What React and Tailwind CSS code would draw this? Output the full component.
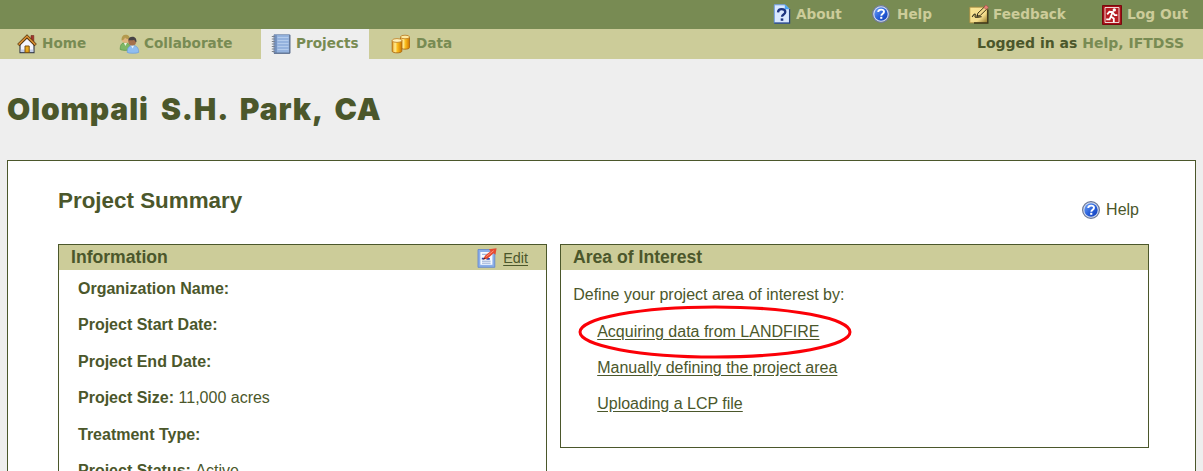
import React from "react";

function HomeIcon() {
  return (
    <svg width="20" height="20" viewBox="0 0 20 20" className="block shrink-0">
      <path d="M14 1.5h2.8v7H14z" fill="#a5342a" stroke="#6d2a22" strokeWidth=".6" />
      <path d="M3 10v8.7h14V10l-7-7z" fill="#f4f6fd" stroke="#3a404c" strokeWidth="1.2" />
      <path d="M3.8 15.5h12.4v2.6H3.8z" fill="#c3cde6" />
      <path d="M1.3 11.2 10 2.6l8.7 8.6" fill="none" stroke="#54370f" strokeWidth="3.2" />
      <path d="M1.6 10.6 10 2.3l8.4 8.3" fill="none" stroke="#d98f33" strokeWidth="1.6" />
      <path d="M8 12h4.2v6.4H8z" fill="#e9a91c" stroke="#7d5312" strokeWidth="1" />
    </svg>
  );
}

function PeopleIcon() {
  return (
    <svg width="21" height="20" viewBox="0 0 21 20" className="block shrink-0">
      <path d="M1.2 15.5c0-5 1.6-6.8 5-6.8s5 2 5 6.8c-2 1.2-8 1.2-10 0z" fill="#7db766" stroke="#5a9548" strokeWidth=".7" />
      <path d="m5 9 1.4 3L8 9z" fill="#eef5e4" />
      <circle cx="6.6" cy="5.3" r="3.8" fill="#e0b47c" />
      <path d="M2.6 6.4C2.4 2 4.6.8 6.8.8s4 1 3.7 4.2C8.7 5.2 6.8 4.4 6 3.4 5.6 4.8 4.4 6 2.6 6.4z" fill="#b39a4e" />
      <path d="M8.2 18.4c0-4.8 2-6.9 5.6-6.9s5.9 2 5.9 6.9c-2.5 1.2-9.2 1.2-11.5 0z" fill="#8fbdf0" stroke="#6b9cd8" strokeWidth=".7" />
      <path d="m12 11.5 1.5 3 1.7-3z" fill="#e9f2fd" />
      <circle cx="13.2" cy="7.6" r="3.9" fill="#a5714c" />
      <path d="M9.2 6.6C9.4 3.6 11.2 2.7 13.4 2.7s4.5 1.3 4 5.6c-1.3-.7-1.8-1.6-2.1-2.5-1.9.8-4.3.3-6.1.8z" fill="#474346" />
    </svg>
  );
}

function NotebookIcon() {
  return (
    <svg width="20" height="20" viewBox="0 0 20 20" className="block shrink-0">
      <path d="M3 .8h15.8v18.4H3z" fill="#8eacd6" stroke="#6d82a8" strokeWidth=".9" />
      <path d="M6 1.2h12.4v17.4H6z" fill="#94b2de" />
      <path d="M6.5 3.5h11M6.5 6.5h11M6.5 9.5h11M6.5 12.5h11M6.5 15.5h11" stroke="#b3cbec" strokeWidth="1" />
      <path d="M3.4 1.2h2.4v17.6H3.4z" fill="#7390bd" />
      <path d="M.8 2.5h3.2M.8 5h3.2M.8 7.5h3.2M.8 10h3.2M.8 12.5h3.2M.8 15h3.2M.8 17.5h3.2" stroke="#7b828d" strokeWidth="1" />
      <path d="M3 19.2h15.8V1" fill="none" stroke="#566784" strokeWidth="1" />
    </svg>
  );
}

function Cylinders() {
  return (
    <svg width="20" height="20" viewBox="0 0 20 20" className="block shrink-0">
      <defs>
        <linearGradient id="gold" x1="0" x2="1">
          <stop offset="0" stopColor="#e79a16" />
          <stop offset=".3" stopColor="#ffec94" />
          <stop offset=".55" stopColor="#fbbc1c" />
          <stop offset="1" stopColor="#cf7800" />
        </linearGradient>
      </defs>
      <path d="M9.5 3v10.5c0 2.2 9 2.2 9 0V3z" fill="url(#gold)" stroke="#ad6b12" strokeWidth=".9" />
      <ellipse cx="14" cy="3" rx="4.5" ry="1.8" fill="#ffeaa0" stroke="#b9791e" strokeWidth=".8" />
      <path d="M1.2 6.5v10.7c0 2.2 9.6 2.2 9.6 0V6.5z" fill="url(#gold)" stroke="#ad6b12" strokeWidth=".9" />
      <ellipse cx="6" cy="6.5" rx="4.8" ry="1.9" fill="#fff2bd" stroke="#b9791e" strokeWidth=".8" />
    </svg>
  );
}

function AboutIcon() {
  return (
    <svg width="18" height="20" viewBox="0 0 18 20" className="block shrink-0">
      <path d="M1.3 .8h10.9l4.2 4.2v14H1.3z" fill="#d9e8ff" stroke="#6e9de6" strokeWidth="1" />
      <path d="M1.3 19.1h15.3V5" fill="none" stroke="#2a4480" strokeWidth="1.2" />
      <path d="M11.8.6v4.7h4.8z" fill="#48a4f5" />
      <path d="M5 8.4C5.1 6 6.6 5.2 8.6 5.2c2.3 0 3.7 1.1 3.7 2.9 0 2.5-3.3 2.4-3.3 4.7" fill="none" stroke="#1c3380" strokeWidth="2.3" />
      <path d="M7.7 14.4h2.6v2.4H7.7z" fill="#1c3380" />
    </svg>
  );
}

function HelpIcon() {
  return (
    <svg width="18" height="18" viewBox="0 0 18 18" className="block shrink-0">
      <defs>
        <linearGradient id="orb" x1="0" y1="0" x2="1" y2="1">
          <stop offset="0" stopColor="#76a5f7" />
          <stop offset=".5" stopColor="#2b63dc" />
          <stop offset="1" stopColor="#123cb8" />
        </linearGradient>
      </defs>
      <circle cx="9" cy="9" r="8.4" fill="#d3ddf0" stroke="#6c7897" strokeWidth="1.2" />
      <circle cx="9" cy="9" r="6.7" fill="url(#orb)" />
      <path d="M6.2 7C6.3 5.2 7.4 4.6 9.1 4.6c1.8 0 2.9.8 2.9 2.2 0 1.9-2.7 1.9-2.7 3.9" fill="none" stroke="#fff" strokeWidth="1.9" />
      <path d="M8.2 11.8h2.1v2H8.2z" fill="#fff" />
    </svg>
  );
}

function FeedbackIcon() {
  return (
    <svg width="20" height="20" viewBox="0 0 20 20" className="block shrink-0">
      <defs>
        <linearGradient id="note" x1="0" y1="0" x2="1" y2="1">
          <stop offset="0" stopColor="#fbe694" />
          <stop offset=".65" stopColor="#f3dc8c" />
          <stop offset="1" stopColor="#8f7426" />
        </linearGradient>
      </defs>
      <path d="M.8 3.2h17.4v15.6H.8z" fill="url(#note)" stroke="#a98a3c" strokeWidth=".8" />
      <path d="M5 19h13.8V5.5" fill="none" stroke="#3c3618" strokeWidth="1.4" />
      <path d="M3 12.8c.8-.6 2-3 3-2.7 1 .3-.8 2.6.4 3.1 1.3.5 3-.5 6.2-.4" fill="none" stroke="#25220f" strokeWidth="1.1" />
      <path d="m7.8 12.4 1.1-3.3 7-6.6 2.3 2.2-7 6.8z" fill="#f0d98c" stroke="#463a18" strokeWidth="1" />
      <path d="m14.8 3.4 2.1-2.3 2.6 2.2-2.3 2.2z" fill="#e38079" stroke="#a84f45" strokeWidth=".6" />
      <path d="m7.6 12.6.7-2 1.4 1.4z" fill="#222" />
    </svg>
  );
}

function LogoutIcon() {
  return (
    <svg width="20" height="20" viewBox="0 0 20 20" className="block shrink-0">
      <path d="M.5.5h19v19H.5z" fill="#a60f16" stroke="#760a0f" />
      <path d="M3 2.5h14v15H3z" fill="#b61c22" stroke="#efd5d2" strokeWidth="1" />
      <circle cx="12.3" cy="4.9" r="1.7" fill="#fff" />
      <path d="M5.2 9.3 7.4 6.8l3.3.3-1.9 4.5 3 2v3.6M8.8 11.6 7.6 14.4H4.2M10.7 7.5l2 2.6h2.6" fill="none" stroke="#fff" strokeWidth="1.8" />
    </svg>
  );
}

function EditIcon() {
  return (
    <svg width="20" height="20" viewBox="0 0 20 20" className="block shrink-0">
      <path d="M1 1.5h16.8v17.8H1z" fill="#8aaee9" stroke="#5f84ca" strokeWidth=".8" />
      <path d="M3.4 4h12v12.8h-12z" fill="#f7faff" />
      <path d="M5 6.3h6M5 13.2h8.6M5 15.2h8.6" stroke="#91a9d4" strokeWidth="1" />
      <path d="M4.8 10.6h2.4M9.4 10.8h3.4" stroke="#2b48b0" strokeWidth="1.7" />
      <path d="m6.4 11.4 1.5-3.6 5.6-4.6L12 1.3 19.6.2l-1.2 6.6-1.8-1.5-6.2 5.4z" fill="#e64b31" />
      <path d="m9.3 8.6 7.4-6" stroke="#ff9c80" strokeWidth=".9" />
      <path d="m6.2 11.6 1-2.2 1.5 1.3z" fill="#5b2a20" />
    </svg>
  );
}

const fields = [
  ["Organization Name:", ""],
  ["Project Start Date:", ""],
  ["Project End Date:", ""],
  ["Project Size:", "11,000 acres"],
  ["Treatment Type:", ""],
  ["Project Status:", "Active"],
];

export default function App() {
  return (
    <div className="flex h-[471px] w-[1203px] flex-col overflow-hidden bg-[#eeeeee] font-['Liberation_Sans',Arial,sans-serif] text-[16px] text-[#4b572b]">
      <header className="font-['DejaVu_Sans',Verdana,sans-serif] text-[13.6px] font-bold">
        <div className="flex h-[29px] items-center justify-end bg-[#788b53] pr-[13px] text-[#cccc99]">
          <a className="flex w-[99px] items-center gap-[5px]"><AboutIcon />About</a>
          <a className="flex w-[97px] items-center gap-[7px]"><HelpIcon />Help</a>
          <a className="flex w-[133px] items-center gap-[4px]"><FeedbackIcon />Feedback</a>
          <a className="flex w-[88px] items-center gap-[5px] text-[13.8px] whitespace-nowrap"><LogoutIcon />Log Out</a>
        </div>
        <nav className="flex h-[30px] items-center bg-[#cccc99] pr-[19px] pl-[17px] text-[#788b53]">
          <a className="flex w-[102px] items-center gap-[5px]"><HomeIcon /><span className="pb-[2px]">Home</span></a>
          <a className="flex w-[142px] items-center gap-[4px]"><PeopleIcon /><span className="pb-[2px]">Collaborate</span></a>
          <a className="flex h-full w-[108px] items-center gap-[5px] bg-[#eeeeee] pl-[10px]"><NotebookIcon /><span className="pb-[2px]">Projects</span></a>
          <a className="flex items-center gap-[5px] pl-[22px]"><Cylinders /><span className="pb-[2px]">Data</span></a>
          <div className="ml-auto pb-[2px] text-[14px]"><span className="text-[#4b572b]">Logged in as</span> Help, IFTDSS</div>
        </nav>
      </header>

      <h1 className="mt-[30px] h-[71px] shrink-0 pl-[7px] font-['Inter',sans-serif] text-[30px] leading-[40px] font-black tracking-[0.9px] [word-spacing:5.3px] whitespace-nowrap">
        Olompali S.H. Park, CA
      </h1>

      <main className="mr-[7px] ml-[7px] h-[400px] shrink-0 border border-[#4b572b] bg-white pr-[46px] pl-[50px]">
        <div className="flex h-[83px] justify-between">
          <h2 className="pt-[27px] text-[22.4px] leading-[26px] font-bold">Project Summary</h2>
          <a className="mt-[39px] mr-[10px] flex h-[20px] items-center gap-[6px]"><HelpIcon />Help</a>
        </div>
        <div className="flex items-start gap-[13px]">
          <section className="h-[300px] w-[489px] shrink-0 border border-[#4b572b]">
            <div className="flex h-[25px] items-center justify-between bg-[#cccc99] pr-[18px] pl-[12px]">
              <h3 className="text-[17.6px] leading-[25px] font-bold">Information</h3>
              <a className="flex items-center gap-[6px] pt-[2px] text-[14.4px] underline underline-offset-2"><EditIcon />Edit</a>
            </div>
            <dl className="flex flex-col pt-[0.8px] pl-[19px]">
              {fields.map(([label, value]) => (
                <div key={label} className="flex h-[36.4px] items-center gap-[4.5px]">
                  <dt className="font-bold">{label}</dt>
                  <dd>{value}</dd>
                </div>
              ))}
            </dl>
          </section>
          <section className="h-[204px] w-[589px] shrink-0 border border-[#4b572b]">
            <h3 className="h-[25px] bg-[#cccc99] pl-[12px] text-[17.6px] leading-[25px] font-bold">Area of Interest</h3>
            <p className="mt-[15px] pl-[12.2px] leading-[20px]">Define your project area of interest by:</p>
            <ul className="mt-[9px] flex flex-col pl-[36.2px] underline underline-offset-2">
              <li className="relative flex h-[36px] items-center">
                <a>Acquiring data from LANDFIRE</a>
                <svg width="274" height="54" viewBox="0 0 274 54" className="absolute -top-[9px] -left-[19px]">
                  <ellipse cx="137" cy="27" rx="135" ry="25" fill="none" stroke="#fb0007" strokeWidth="3" />
                </svg>
              </li>
              <li className="flex h-[36px] items-center"><a>Manually defining the project area</a></li>
              <li className="flex h-[36px] items-center"><a>Uploading a LCP file</a></li>
            </ul>
          </section>
        </div>
      </main>
    </div>
  );
}
